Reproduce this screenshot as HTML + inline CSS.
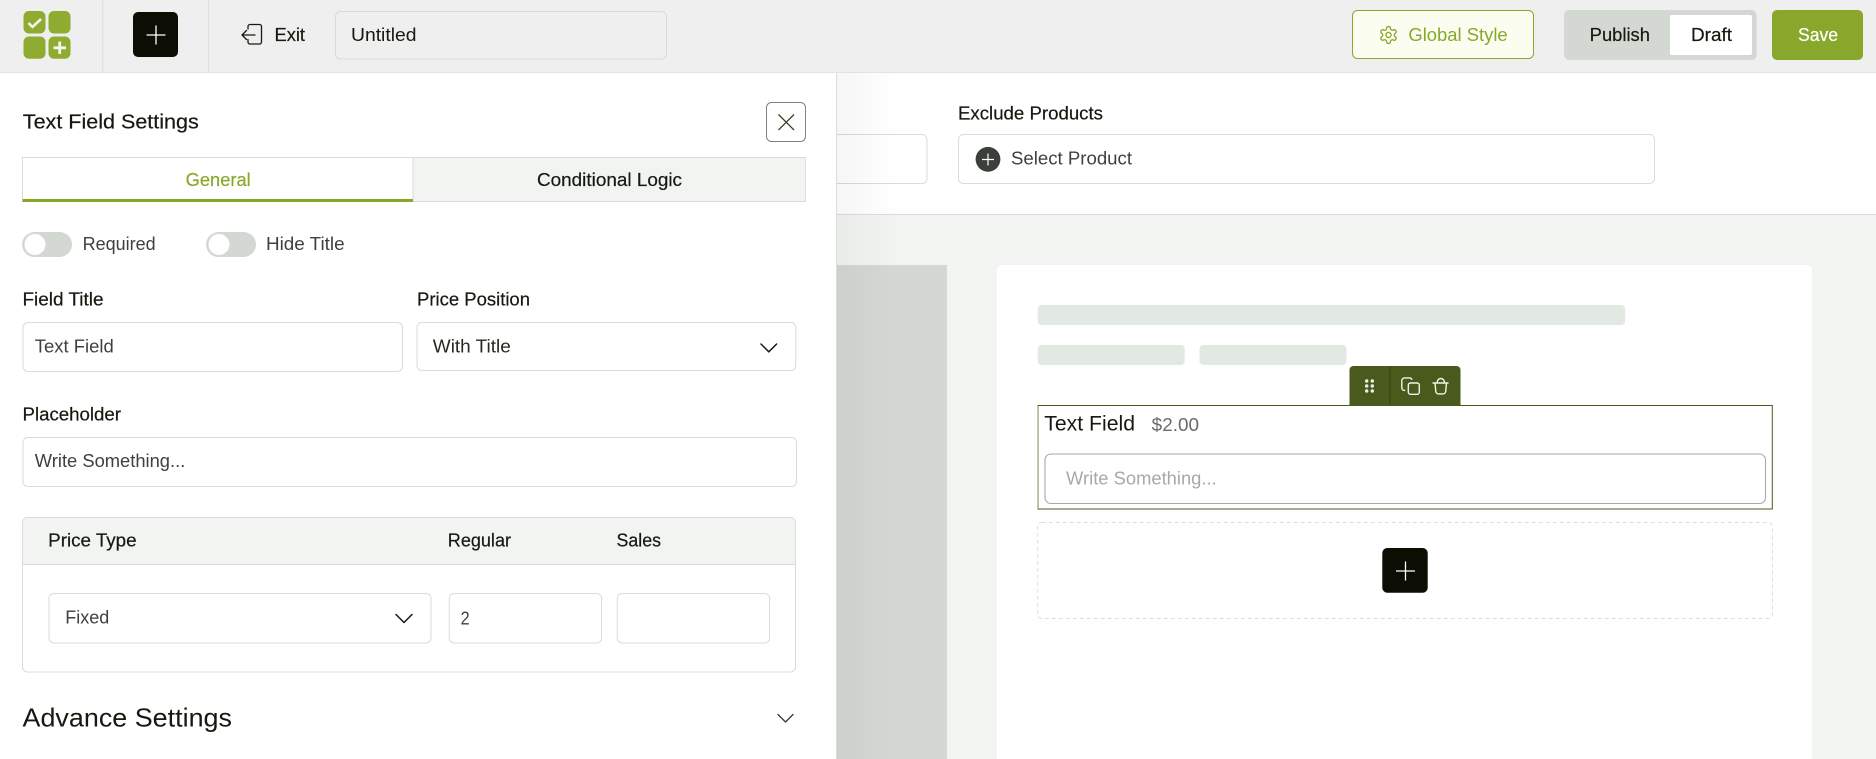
<!DOCTYPE html>
<html lang="en">
<head>
<meta charset="utf-8">
<title>Text Field Settings</title>
<style>
html,body{margin:0;padding:0;width:1876px;height:759px;overflow:hidden;background:#fff}
svg{display:block}
text{font-family:"Liberation Sans",Arial,sans-serif;font-size:18px;fill:#16190f}
.m{stroke:#16190f;stroke-width:.2}
.f{fill:#fff;stroke:#d9dcd9;stroke-width:1}
.s{fill:#fff;stroke:#d9dcd9;stroke-width:1}
.i{fill:none;stroke-linecap:round;stroke-linejoin:round}
.v{fill:#3d413d}
</style>
</head>
<body>
<svg xmlns="http://www.w3.org/2000/svg" width="1876" height="759" viewBox="0 0 1876 759">
<defs>
<linearGradient id="sh" x1="0" x2="1" y1="0" y2="0"><stop offset="0" stop-color="#000" stop-opacity=".035"/><stop offset="1" stop-color="#000" stop-opacity="0"/></linearGradient>
</defs>

<!-- canvas background -->
<rect x="0" y="0" width="1876" height="759" fill="#fff"/>
<rect x="837" y="215" width="1039" height="544" fill="#f2f4f2"/>
<rect x="837" y="214" width="1039" height="1" fill="#d9dcd9"/>

<!-- top settings strip -->
<rect x="700" y="134.5" width="227" height="49" rx="5" class="s"/>
<text x="958" y="119.500" textLength="145" lengthAdjust="spacingAndGlyphs" class="m">Exclude Products</text>
<rect x="958.500" y="134.5" width="696" height="49" rx="5" class="s"/>
<circle cx="988" cy="159.3" r="12.4" fill="#3a3f3a"/>
<path d="M982 159.5h12M988 153.500v12" stroke="#fff" stroke-width="1.200" fill="none"/>
<text x="1011" y="164.500" textLength="121" lengthAdjust="spacingAndGlyphs" class="v">Select Product</text>

<!-- canvas content -->
<rect x="837" y="265" width="110" height="494" fill="#d3d8d3"/>
<rect x="997" y="265" width="815" height="520" rx="5" fill="#fff"/>
<rect x="1037.7" y="305" width="587.5" height="20" rx="4" fill="#e2e9e3"/>
<rect x="1037.7" y="345" width="147" height="20" rx="4" fill="#e2e9e3"/>
<rect x="1199.5" y="345" width="147" height="20" rx="4" fill="#e2e9e3"/>

<!-- panel shadow -->
<rect x="837" y="73" width="62" height="686" fill="url(#sh)"/>

<!-- selected field -->
<path d="M1349.5 405.5V370a4 4 0 0 1 4-4H1456.500a4 4 0 0 1 4 4V405.5z" fill="#4a5a1c"/>
<rect x="1389.3" y="366" width="1.4" height="39" fill="#3c4a14"/>
<g fill="#fff" opacity=".9">
<circle cx="1366.7" cy="381" r="1.7"/><circle cx="1372.3" cy="381" r="1.7"/>
<circle cx="1366.7" cy="386" r="1.7"/><circle cx="1372.3" cy="386" r="1.7"/>
<circle cx="1366.7" cy="391" r="1.7"/><circle cx="1372.3" cy="391" r="1.7"/>
</g>
<g class="i" stroke="#f2f4ea" stroke-width="1.4" fill="none">
<rect x="1408.3" y="383" width="11" height="11.3" rx="2.2"/>
<path d="M1404.6 390.5a2.8 2.8 0 0 1-2.8-2.8v-7a2.8 2.8 0 0 1 2.8-2.8h5a2.6 2.6 0 0 1 2.2 1.4"/>
<path d="M1433 383h15M1435 383l.8 8.300a2.800 2.800 0 0 0 2.800 2.600h4.300a2.800 2.800 0 0 0 2.800-2.600l.8-8.300M1437.300 383v-1a3.500 3.500 0 0 1 3.500-3.500h0a3.500 3.500 0 0 1 3.500 3.500v1"/>
</g>
<rect x="1038" y="405.5" width="734.3" height="103.5" fill="#fff" stroke="#4a5a1c" stroke-width="1"/>
<rect x="1037.6" y="406" width="1" height="103" fill="#8e9a6e"/>
<text x="1044.3" y="430.7" textLength="90.7" lengthAdjust="spacingAndGlyphs" style="font-size:21px">Text Field</text>
<text x="1151.7" y="431" textLength="47.3" lengthAdjust="spacingAndGlyphs" style="fill:#686c68">$2.00</text>
<rect x="1045" y="454" width="720.500" height="49.5" rx="6" fill="#fff" stroke="#a4aaa4" stroke-width="1.100"/>
<text x="1066" y="484.7" textLength="150.7" lengthAdjust="spacingAndGlyphs" style="fill:#a6aaa6">Write Something...</text>

<rect x="1037.7" y="522.5" width="734.8" height="96" rx="4" fill="none" stroke="#dcdfdc" stroke-width="1" stroke-dasharray="4 3"/>
<rect x="1382.3" y="548" width="45.4" height="44.7" rx="5" fill="#0c0e04"/>
<path d="M1396 571h19M1405.500 561.500v19" stroke="#fff" stroke-width="1.300" fill="none"/>

<!-- left panel -->
<rect x="0" y="73" width="836" height="686" fill="#fff"/>
<rect x="836" y="73" width="1" height="686" fill="#d9dcd9"/>
<text x="22.8" y="128.5" textLength="176" lengthAdjust="spacingAndGlyphs" class="m" style="font-size:20.500px">Text Field Settings</text>
<rect x="766.5" y="102.5" width="39" height="39" rx="5" fill="#fff" stroke="#808080" stroke-width="1"/>
<path d="M778.5 114.5l15.5 15.5M794 114.5l-15.5 15.5" stroke="#3a4220" stroke-width="1.3" fill="none"/>

<rect x="22.5" y="157.5" width="783" height="44" fill="#f2f4f2" stroke="#d9dcd9" stroke-width="1"/>
<rect x="22.5" y="157.5" width="390.5" height="44" fill="#fff" stroke="#d9dcd9" stroke-width="1"/>
<rect x="22.5" y="199" width="390.5" height="3" fill="#89a82b"/>
<text x="185.7" y="186" textLength="65" lengthAdjust="spacingAndGlyphs" class="m" style="fill:#89a82b;stroke:#89a82b">General</text>
<text x="537" y="186" textLength="145" lengthAdjust="spacingAndGlyphs" class="m">Conditional Logic</text>

<rect x="22" y="232" width="50" height="25" rx="12.5" fill="#d3d8d3"/>
<circle cx="35" cy="244.5" r="10.5" fill="#fff"/>
<text x="82.6" y="250" textLength="73" lengthAdjust="spacingAndGlyphs" class="v">Required</text>
<rect x="206" y="232" width="50" height="25" rx="12.5" fill="#d3d8d3"/>
<circle cx="219" cy="244.5" r="10.5" fill="#fff"/>
<text x="266" y="250" textLength="78.6" lengthAdjust="spacingAndGlyphs" class="v">Hide Title</text>

<text x="22.5" y="305.500" textLength="81" lengthAdjust="spacingAndGlyphs" class="m">Field Title</text>
<text x="417" y="305.500" textLength="113" lengthAdjust="spacingAndGlyphs" class="m">Price Position</text>
<rect x="23" y="322.5" width="379.500" height="49" rx="5" class="f"/>
<text x="34.8" y="352.500" textLength="79" lengthAdjust="spacingAndGlyphs" class="v">Text Field</text>
<rect x="417" y="322.5" width="378.800" height="48" rx="5" class="f"/>
<text x="432.8" y="352.500" textLength="78" lengthAdjust="spacingAndGlyphs" style="fill:#25291f">With Title</text>
<path d="M761 344l7.800 7.800 7.800-7.800" class="i" stroke="#16190f" stroke-width="1.500"/>

<text x="22.5" y="420.500" textLength="98.5" lengthAdjust="spacingAndGlyphs" class="m">Placeholder</text>
<rect x="23" y="437.5" width="773.500" height="49" rx="5" class="f"/>
<text x="34.8" y="467" textLength="150.5" lengthAdjust="spacingAndGlyphs" class="v">Write Something...</text>

<rect x="22.500" y="517.5" width="773" height="154.500" rx="5" fill="#fff" stroke="#d9dcd9" stroke-width="1"/>
<path d="M23 564V522.500a4.500 4.500 0 0 1 4.500-4.500H790.500a4.500 4.500 0 0 1 4.500 4.500V564z" fill="#f2f4f2"/>
<rect x="22.500" y="564" width="773" height="1" fill="#d9dcd9"/>
<text x="48.2" y="546.500" textLength="88.4" lengthAdjust="spacingAndGlyphs" class="m">Price Type</text>
<text x="447.8" y="546.500" textLength="63.2" lengthAdjust="spacingAndGlyphs" class="m">Regular</text>
<text x="616.5" y="546.500" textLength="44.5" lengthAdjust="spacingAndGlyphs" class="m">Sales</text>
<rect x="49" y="593.5" width="382" height="49.5" rx="5" class="f"/>
<text x="65.3" y="623.500" textLength="44" lengthAdjust="spacingAndGlyphs" class="v">Fixed</text>
<path d="M396 614.500l8 8 8-8" class="i" stroke="#16190f" stroke-width="1.500"/>
<rect x="449.300" y="593.5" width="152.300" height="49.5" rx="5" class="f"/>
<text x="460.600" y="624.500" textLength="9" lengthAdjust="spacingAndGlyphs" class="v">2</text>
<rect x="617.300" y="593.5" width="152.300" height="49.5" rx="5" class="f"/>

<text x="22.500" y="726.700" textLength="209.500" lengthAdjust="spacingAndGlyphs" style="font-size:26px">Advance Settings</text>
<path d="M778 714.500l7.500 7.500 7.500-7.500" class="i" stroke="#3a3f3a" stroke-width="1.400"/>

<!-- header -->
<rect x="0" y="0" width="1876" height="72" fill="#efefef"/>
<rect x="0" y="72" width="1876" height="1" fill="#e2e4e2"/>
<rect x="102.300" y="0" width="1" height="72" fill="#dcdcdc"/>
<rect x="208.200" y="0" width="1" height="72" fill="#dcdcdc"/>

<!-- logo -->
<g fill="#8fac30">
<rect x="23.500" y="11" width="22" height="22.500" rx="5.500"/>
<rect x="48.500" y="11" width="22" height="22.500" rx="5.500"/>
<rect x="23.500" y="36.500" width="22" height="22.200" rx="5.500"/>
<rect x="48.500" y="36.500" width="22" height="22.200" rx="5.500"/>
</g>
<path d="M28.500 23l4 4 8.500-8" fill="none" stroke="#f4f6ec" stroke-width="2.600"/>
<path d="M53.500 47.800h12.500M59.700 41.500v12.500" fill="none" stroke="#f4f6ec" stroke-width="2.800"/>

<rect x="133" y="12" width="45" height="45" rx="5" fill="#0c0e04"/>
<path d="M146.500 35h19M156 25.500v19" stroke="#fff" stroke-width="1.300" fill="none"/>

<g class="i" stroke="#16190f" stroke-width="1.300">
<path d="M248 29v-2.500a2 2 0 0 1 2-2h9.500a2 2 0 0 1 2 2v15.500a2 2 0 0 1-2 2H250a2 2 0 0 1-2-2v-2.500"/>
<path d="M255 35H242M246.500 30.500L242 35l4.500 4.500"/>
</g>
<text x="274.500" y="41" textLength="30.500" lengthAdjust="spacingAndGlyphs" class="m">Exit</text>
<rect x="335.500" y="11.500" width="331" height="47.500" rx="5" fill="#efefef" stroke="#d9dbd9" stroke-width="1"/>
<text x="351" y="41" textLength="65.500" lengthAdjust="spacingAndGlyphs">Untitled</text>

<rect x="1352.500" y="10.500" width="181" height="48" rx="5" fill="#fbfdf0" stroke="#89a82b" stroke-width="1"/>
<g transform="translate(1378.300 24.800) scale(.85)">
<path class="i" stroke="#89a82b" stroke-width="1.600" d="M12.220 2h-.44a2 2 0 0 0-2 2v.18a2 2 0 0 1-1 1.730l-.43.250a2 2 0 0 1-2 0l-.15-.08a2 2 0 0 0-2.730.730l-.22.380a2 2 0 0 0 .73 2.730l.15.100a2 2 0 0 1 1 1.720v.51a2 2 0 0 1-1 1.740l-.15.09a2 2 0 0 0-.73 2.730l.22.380a2 2 0 0 0 2.730.730l.15-.08a2 2 0 0 1 2 0l.43.250a2 2 0 0 1 1 1.730V20a2 2 0 0 0 2 2h.44a2 2 0 0 0 2-2v-.18a2 2 0 0 1 1-1.730l.43-.25a2 2 0 0 1 2 0l.15.08a2 2 0 0 0 2.730-.73l.22-.39a2 2 0 0 0-.73-2.730l-.15-.08a2 2 0 0 1-1-1.740v-.5a2 2 0 0 1 1-1.740l.15-.09a2 2 0 0 0 .73-2.730l-.22-.38a2 2 0 0 0-2.730-.73l-.15.08a2 2 0 0 1-2 0l-.43-.25a2 2 0 0 1-1-1.730V4a2 2 0 0 0-2-2z"/>
<circle class="i" cx="12" cy="12" r="3" stroke="#89a82b" stroke-width="1.600"/>
</g>
<text x="1408.400" y="41" textLength="99.300" lengthAdjust="spacingAndGlyphs" style="fill:#89a82b">Global Style</text>

<rect x="1564" y="10" width="192.600" height="50" rx="5" fill="#d3d8d3"/>
<text x="1589.700" y="41" textLength="60.300" lengthAdjust="spacingAndGlyphs" class="m">Publish</text>
<rect x="1670" y="15" width="82" height="40" rx="2" fill="#fff"/>
<text x="1691" y="41" textLength="41" lengthAdjust="spacingAndGlyphs" class="m">Draft</text>
<rect x="1772" y="10" width="91" height="50" rx="5" fill="#89a82b"/>
<text x="1798" y="41" textLength="40" lengthAdjust="spacingAndGlyphs" class="m" style="fill:#fff;stroke:#fff">Save</text>
</svg>
</body>
</html>
